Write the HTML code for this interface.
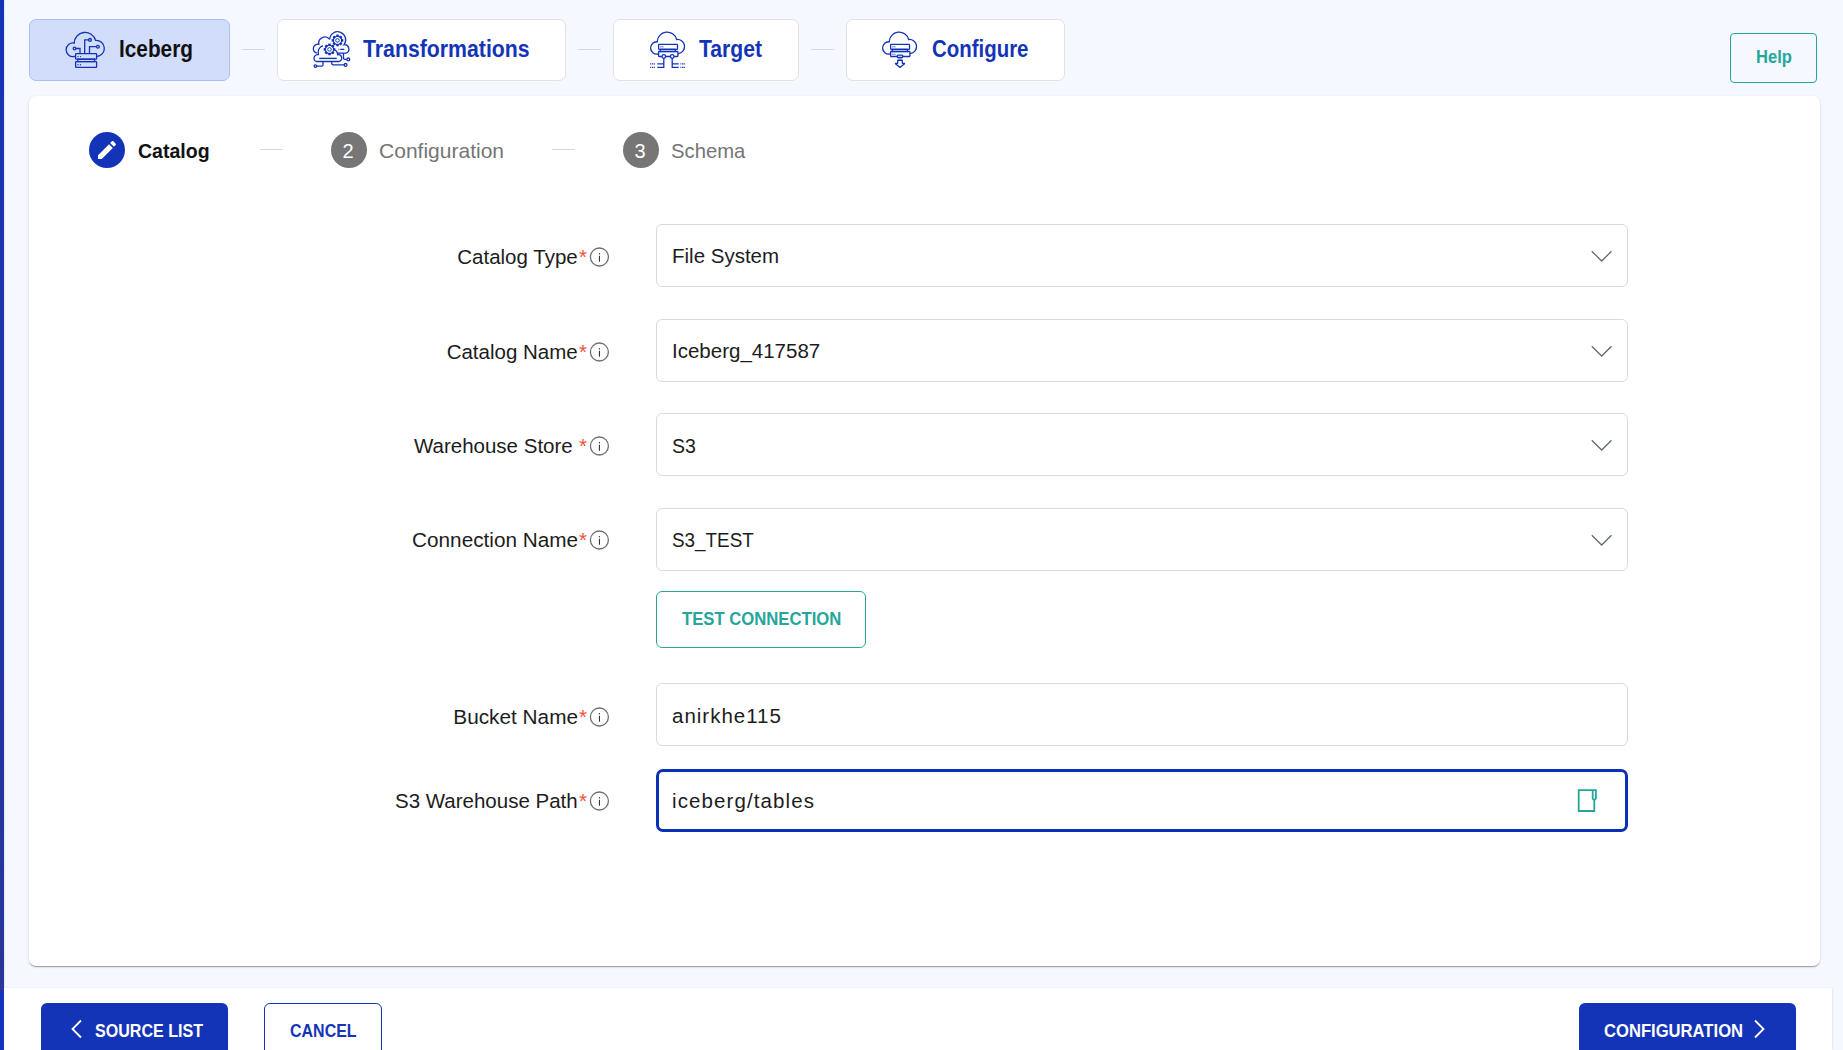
<!DOCTYPE html>
<html><head><meta charset="utf-8">
<style>
*{box-sizing:border-box;margin:0;padding:0}
html,body{width:1843px;height:1050px;overflow:hidden}
body{background:#f5f8fe;font-family:"Liberation Sans",sans-serif;position:relative;color:#1c1c1c}
.a{position:absolute}
.t{position:absolute;white-space:nowrap;display:block}
svg{position:absolute;overflow:visible}
</style></head><body>
<div class="a" style="left:0;top:0;width:4px;height:991px;background:linear-gradient(#1434b8 0px,#1a35b0 250px,#1f35a8 500px,#2236a3 750px,#26379e 900px,#2c3499 991px)"></div>
<div class="a" style="left:0;top:991px;width:4px;height:59px;background:#1434bd"></div>
<div class="a" style="left:4px;top:0;width:1px;height:1050px;background:#e6e7ea"></div>
<div class="a" style="left:29px;top:19px;width:201px;height:62px;background:#d1ddfb;border:1px solid #a9bff7;border-radius:7px"></div>
<div class="a" style="left:277px;top:19px;width:288.5px;height:62px;background:#ffffff;border:1px solid #e0e1e4;border-radius:7px"></div>
<div class="a" style="left:613px;top:19px;width:185.5px;height:62px;background:#ffffff;border:1px solid #e0e1e4;border-radius:7px"></div>
<div class="a" style="left:845.5px;top:19px;width:219.0px;height:62px;background:#ffffff;border:1px solid #e0e1e4;border-radius:7px"></div>
<div class="a" style="left:242px;top:49px;width:23px;height:1px;background:#d6d9df"></div>
<div class="a" style="left:578px;top:49px;width:23px;height:1px;background:#d6d9df"></div>
<div class="a" style="left:811px;top:49px;width:23px;height:1px;background:#d6d9df"></div>
<span class="t" style="left:118.8px;top:36.88px;font-size:24px;line-height:24px;color:#111;font-weight:bold;transform:scaleX(0.866);transform-origin:0 0;">Iceberg</span>
<span class="t" style="left:362.8px;top:36.68px;font-size:24px;line-height:24px;color:#1434b8;font-weight:bold;transform:scaleX(0.886);transform-origin:0 0;">Transformations</span>
<span class="t" style="left:698.5px;top:36.68px;font-size:24px;line-height:24px;color:#1434b8;font-weight:bold;transform:scaleX(0.881);transform-origin:0 0;">Target</span>
<span class="t" style="left:931.5px;top:36.68px;font-size:24px;line-height:24px;color:#1434b8;font-weight:bold;transform:scaleX(0.851);transform-origin:0 0;">Configure</span>
<svg style="left:0;top:0" width="1843" height="100" viewBox="0 0 1843 100">
<defs>
<g id="gear"><circle cx="0" cy="0" r="4.2" fill="none" stroke="#1434b8" stroke-width="1.1"/><circle cx="0" cy="0" r="1.8" fill="none" stroke="#1434b8" stroke-width="1"/>
<g fill="#1434b8"><rect x="-0.6" y="-5.2" width="1.2" height="1.2"/><rect x="-0.6" y="4" width="1.2" height="1.2"/><rect x="-5.2" y="-0.6" width="1.2" height="1.2"/><rect x="4" y="-0.6" width="1.2" height="1.2"/>
<g transform="rotate(45)"><rect x="-0.6" y="-5.2" width="1.2" height="1.2"/><rect x="-0.6" y="4" width="1.2" height="1.2"/><rect x="-5.2" y="-0.6" width="1.2" height="1.2"/><rect x="4" y="-0.6" width="1.2" height="1.2"/></g></g></g>
</defs>
<!-- Iceberg icon origin 60,28 -->
<g transform="translate(60,28)" fill="none" stroke="#1434b8" stroke-width="1.3">
<path d="M15.3,28.5 H14 A6.8,6.8 0 1 1 14.2,15.1 A10.9,10.9 0 0 1 35.6,12.4 A8,8 0 0 1 36.9,28.5 H36.7"/>
<rect x="15.6" y="25.6" width="21" height="5.6" rx="0.6"/>
<rect x="17.8" y="31.2" width="16.8" height="2.4"/>
<rect x="15.6" y="33.7" width="21" height="5.6" rx="0.6"/>
<path d="M15.8,20.5 H20 V25.6 M24.7,25.6 V11.8 H28.6 M29.5,25.6 V18.6 H36.5"/>
<circle cx="14.5" cy="20.5" r="1.3"/><circle cx="30" cy="11.9" r="1.4"/><circle cx="37.9" cy="18.7" r="1.4"/>
<g fill="#1434b8" stroke="none"><circle cx="18" cy="28.6" r="0.7"/><circle cx="20.5" cy="28.6" r="0.7"/><circle cx="18" cy="36.7" r="0.7"/><circle cx="20.5" cy="36.7" r="0.7"/></g>
</g>
<!-- Transformations origin 310,28 -->
<g transform="translate(310,28)" fill="none" stroke="#1434b8" stroke-width="1.3">
<path d="M19.7,11.3 A8,8 0 1 1 33.9,16.8 A4.3,4.3 0 0 1 36,25.1 H27.7"/>
<path d="M19.7,11.3 A6.2,6.2 0 0 0 8.8,16.3 A4.5,4.5 0 0 0 6.9,25.1"/>
<path d="M8.6,26.8 A7,7 0 0 1 13,17.6 M24.7,21.8 A6,6 0 0 1 27.7,26.8 A3.4,3.4 0 0 1 28.9,33.5 H6.3 A3.4,3.4 0 0 1 8.8,26.9"/>
<path d="M28.5,21.4 H35" stroke-dasharray="0.8 1 4 1 1.5"/>
<path d="M9.2,30.4 H26.8" stroke-width="1.4"/>
<path d="M13,33.5 V36.8 Q13,38.1 11.6,38.1 H6.7 M21.8,33.5 V35.6 Q21.8,36.9 23.2,36.9 H34.1 M33.5,25.1 V30.3 Q33.5,31.4 34.7,31.4 H36.9"/>
<circle cx="5.4" cy="38.1" r="1.3"/><circle cx="35.6" cy="36.9" r="1.4"/><circle cx="38.3" cy="31.4" r="1.4"/>
<use href="#gear" transform="translate(27.5,12.4)"/>
<use href="#gear" transform="translate(19.5,21.4)"/>
</g>
<!-- Target origin 646,28 -->
<g transform="translate(646,28)" fill="none" stroke="#1434b8" stroke-width="1.3">
<path d="M12.6,26 H11.7 A6.15,6.15 0 1 1 11.3,13.8 A9.8,9.8 0 0 1 30.6,11.5 A7.1,7.1 0 0 1 32.3,25.6 H31.9"/>
<rect x="12.6" y="16.3" width="18.9" height="5" rx="0.5"/>
<rect x="14.3" y="21.3" width="15" height="2.2"/>
<rect x="12.6" y="23.5" width="19.3" height="5" rx="0.5"/>
<path d="M14.3,18.8 H17.6" stroke-width="1.5" stroke-dasharray="1 0.4" opacity="0.6"/>
<circle cx="17.8" cy="28.5" r="1.8" fill="#fff"/><circle cx="26.2" cy="28.5" r="1.8" fill="#fff"/>
<path d="M17.8,30.3 V39.4 H11.3 M17.8,35.8 H11.3 M26.2,30.3 V39.4 H32.7 M26.2,35.8 H32.7"/>
<path d="M4.2,35.8 H9.6 M4.2,39.4 H9.6 M34.4,35.8 H39.8 M34.4,39.4 H39.8" stroke-dasharray="0.9 0.7 1.5 0.7"/>
</g>
<!-- Configure origin 878,28 -->
<g transform="translate(878,28)" fill="none" stroke="#1434b8" stroke-width="1.3">
<path d="M12.6,26 H11.7 A6.15,6.15 0 1 1 11.3,13.8 A9.8,9.8 0 0 1 30.6,11.5 A7.1,7.1 0 0 1 32.3,25.6 H31.9"/>
<rect x="12.6" y="16.3" width="18.9" height="5" rx="0.5"/>
<rect x="14.3" y="21.3" width="15" height="2.2"/>
<rect x="12.6" y="23.5" width="19.3" height="5" rx="0.5"/>
<path d="M14.3,18.8 H17.6 M14.3,26.2 H17.6" stroke-width="1.5" stroke-dasharray="1 0.4" opacity="0.6"/>
<rect x="19.3" y="27.2" width="5.4" height="2.3" rx="0.8" fill="#fff"/>
<rect x="19.7" y="30" width="4.6" height="2" fill="#8fa2e0" stroke="none"/>
<path d="M19.7,32.3 V35.4 H17.2 L22,39.4 L26.8,35.4 H24.3 V32.3 Z" stroke-linejoin="bevel"/>
</g>
</svg>

<div class="a" style="left:1730px;top:33px;width:87px;height:50px;border:1px solid #26a69a;border-radius:4px"></div>
<span class="t" style="left:1756.2px;top:47.66px;font-size:18px;line-height:18px;color:#26a69a;font-weight:bold;transform:scaleX(0.92);transform-origin:0 0;">Help</span>
<div class="a" style="left:29px;top:96px;width:1791px;height:870px;background:#fff;border-radius:7px;box-shadow:0 2px 1px -1px rgba(0,0,0,.2),0 1px 1px 0 rgba(0,0,0,.14),0 1px 3px 0 rgba(0,0,0,.12)"></div>
<div class="a" style="left:89px;top:132px;width:36px;height:36px;border-radius:50%;background:#1434b8"></div>
<svg style="left:95px;top:138px" width="24" height="24" viewBox="0 0 24 24"><path fill="#fff" d="M3 17.25V21h3.75L17.81 9.94l-3.75-3.75L3 17.25zM20.71 7.04c.39-.39.39-1.02 0-1.41l-2.34-2.34c-.39-.39-1.02-.39-1.41 0l-1.83 1.83 3.75 3.75 1.83-1.83z"/></svg>
<span class="t" style="left:138px;top:140.22px;font-size:21px;line-height:21px;color:#111;font-weight:bold;transform:scaleX(0.93);transform-origin:0 0;">Catalog</span>
<div class="a" style="left:260px;top:149px;width:23px;height:1px;background:#d6d9df"></div>
<div class="a" style="left:331px;top:132px;width:36px;height:36px;border-radius:50%;background:#767676"></div>
<span class="t" style="left:342.5px;top:140.57px;font-size:20px;line-height:20px;color:#fff;">2</span>
<span class="t" style="left:379.1px;top:140.02px;font-size:21px;line-height:21px;color:#757575;">Configuration</span>
<div class="a" style="left:552px;top:149px;width:23px;height:1px;background:#d6d9df"></div>
<div class="a" style="left:623px;top:132px;width:36px;height:36px;border-radius:50%;background:#767676"></div>
<span class="t" style="left:634.5px;top:140.57px;font-size:20px;line-height:20px;color:#fff;">3</span>
<span class="t" style="left:671.3px;top:140.02px;font-size:21px;line-height:21px;color:#757575;transform:scaleX(0.965);transform-origin:0 0;">Schema</span>
<span class="t" style="right:1265.3px;top:246.95px;font-size:20.5px;line-height:20.5px;color:#1c1c1c;">Catalog Type</span>
<span class="t" style="left:579px;top:246.95px;font-size:20.5px;line-height:20.5px;color:#f3513a;">*</span>
<svg style="left:589px;top:246.8px" width="21" height="21" viewBox="0 0 21 21"><circle cx="10.4" cy="10" r="9" fill="none" stroke="#6f6f6f" stroke-width="1.3"/><rect x="9.9" y="8.8" width="1.1" height="5.9" fill="#333"/><rect x="9.9" y="6.1" width="1.1" height="1.3" fill="#333"/></svg>
<div class="a" style="left:656px;top:224px;width:972px;height:63px;background:#fff;border:1px solid #dadada;border-radius:6px"></div>
<span class="t" style="left:672px;top:246.45px;font-size:20.5px;line-height:20.5px;color:#1c1c1c;">File System</span>
<svg style="left:1590px;top:250px" width="24" height="12" viewBox="0 0 24 12"><path d="M1.8 1.2 L11.7 11 L21.5 1.2" fill="none" stroke="#5d6975" stroke-width="1.25"/></svg>
<span class="t" style="right:1265.3px;top:341.65px;font-size:20.5px;line-height:20.5px;color:#1c1c1c;">Catalog Name</span>
<span class="t" style="left:579px;top:341.65px;font-size:20.5px;line-height:20.5px;color:#f3513a;">*</span>
<svg style="left:589px;top:341.5px" width="21" height="21" viewBox="0 0 21 21"><circle cx="10.4" cy="10" r="9" fill="none" stroke="#6f6f6f" stroke-width="1.3"/><rect x="9.9" y="8.8" width="1.1" height="5.9" fill="#333"/><rect x="9.9" y="6.1" width="1.1" height="1.3" fill="#333"/></svg>
<div class="a" style="left:656px;top:319px;width:972px;height:63px;background:#fff;border:1px solid #dadada;border-radius:6px"></div>
<span class="t" style="left:672px;top:341.15px;font-size:20.5px;line-height:20.5px;color:#1c1c1c;">Iceberg_417587</span>
<svg style="left:1590px;top:345px" width="24" height="12" viewBox="0 0 24 12"><path d="M1.8 1.2 L11.7 11 L21.5 1.2" fill="none" stroke="#5d6975" stroke-width="1.25"/></svg>
<span class="t" style="right:1270.3px;top:436.35px;font-size:20.5px;line-height:20.5px;color:#1c1c1c;">Warehouse Store</span>
<span class="t" style="left:579px;top:436.35px;font-size:20.5px;line-height:20.5px;color:#f3513a;">*</span>
<svg style="left:589px;top:436.2px" width="21" height="21" viewBox="0 0 21 21"><circle cx="10.4" cy="10" r="9" fill="none" stroke="#6f6f6f" stroke-width="1.3"/><rect x="9.9" y="8.8" width="1.1" height="5.9" fill="#333"/><rect x="9.9" y="6.1" width="1.1" height="1.3" fill="#333"/></svg>
<div class="a" style="left:656px;top:413px;width:972px;height:63px;background:#fff;border:1px solid #dadada;border-radius:6px"></div>
<span class="t" style="left:672px;top:435.85px;font-size:20.5px;line-height:20.5px;color:#1c1c1c;transform:scaleX(0.95);transform-origin:0 0;">S3</span>
<svg style="left:1590px;top:439px" width="24" height="12" viewBox="0 0 24 12"><path d="M1.8 1.2 L11.7 11 L21.5 1.2" fill="none" stroke="#5d6975" stroke-width="1.25"/></svg>
<span class="t" style="right:1265.3px;top:530.35px;font-size:20.5px;line-height:20.5px;color:#1c1c1c;transform:scaleX(1.012);transform-origin:100% 0;">Connection Name</span>
<span class="t" style="left:579px;top:530.35px;font-size:20.5px;line-height:20.5px;color:#f3513a;">*</span>
<svg style="left:589px;top:530.2px" width="21" height="21" viewBox="0 0 21 21"><circle cx="10.4" cy="10" r="9" fill="none" stroke="#6f6f6f" stroke-width="1.3"/><rect x="9.9" y="8.8" width="1.1" height="5.9" fill="#333"/><rect x="9.9" y="6.1" width="1.1" height="1.3" fill="#333"/></svg>
<div class="a" style="left:656px;top:508px;width:972px;height:63px;background:#fff;border:1px solid #dadada;border-radius:6px"></div>
<span class="t" style="left:672px;top:529.85px;font-size:20.5px;line-height:20.5px;color:#1c1c1c;transform:scaleX(0.92);transform-origin:0 0;">S3_TEST</span>
<svg style="left:1590px;top:534px" width="24" height="12" viewBox="0 0 24 12"><path d="M1.8 1.2 L11.7 11 L21.5 1.2" fill="none" stroke="#5d6975" stroke-width="1.25"/></svg>
<span class="t" style="right:1265.3px;top:706.65px;font-size:20.5px;line-height:20.5px;color:#1c1c1c;transform:scaleX(1.014);transform-origin:100% 0;">Bucket Name</span>
<span class="t" style="left:579px;top:706.65px;font-size:20.5px;line-height:20.5px;color:#f3513a;">*</span>
<svg style="left:589px;top:706.5px" width="21" height="21" viewBox="0 0 21 21"><circle cx="10.4" cy="10" r="9" fill="none" stroke="#6f6f6f" stroke-width="1.3"/><rect x="9.9" y="8.8" width="1.1" height="5.9" fill="#333"/><rect x="9.9" y="6.1" width="1.1" height="1.3" fill="#333"/></svg>
<div class="a" style="left:656px;top:683px;width:972px;height:63px;background:#fff;border:1px solid #dadada;border-radius:6px"></div>
<span class="t" style="left:672px;top:706.15px;font-size:20.5px;line-height:20.5px;color:#1c1c1c;letter-spacing:1.0px;">anirkhe115</span>
<span class="t" style="right:1265.3px;top:791.45px;font-size:20.5px;line-height:20.5px;color:#1c1c1c;">S3 Warehouse Path</span>
<span class="t" style="left:579px;top:791.45px;font-size:20.5px;line-height:20.5px;color:#f3513a;">*</span>
<svg style="left:589px;top:791.3px" width="21" height="21" viewBox="0 0 21 21"><circle cx="10.4" cy="10" r="9" fill="none" stroke="#6f6f6f" stroke-width="1.3"/><rect x="9.9" y="8.8" width="1.1" height="5.9" fill="#333"/><rect x="9.9" y="6.1" width="1.1" height="1.3" fill="#333"/></svg>
<div class="a" style="left:656px;top:769px;width:972px;height:63px;background:#fff;border:3px solid #0b2fb6;border-radius:7px"></div>
<span class="t" style="left:672px;top:790.95px;font-size:20.5px;line-height:20.5px;color:#1c1c1c;letter-spacing:1.1px;">iceberg/tables</span>
<div class="a" style="left:656px;top:591px;width:210px;height:57px;border:1px solid #26a69a;border-radius:6px"></div>
<span class="t" style="left:682px;top:609.66px;font-size:18px;line-height:18px;color:#26a69a;font-weight:bold;transform:scaleX(0.926);transform-origin:0 0;">TEST CONNECTION</span>
<svg style="left:0;top:0" width="1843" height="1050" viewBox="0 0 1843 1050"><path d="M1594.3,800.2 V811 H1578.7 V790.2 H1595.9 V798.6 L1594.3,800.2 L1592.7,798.6 V790.2" fill="none" stroke="#26a69a" stroke-width="1.8" stroke-linejoin="miter"/></svg>
<div class="a" style="left:4px;top:988px;width:1828px;height:62px;background:#fff;box-shadow:1px 0 2px rgba(0,0,0,.08)"></div>
<div class="a" style="left:41px;top:1003px;width:187px;height:60px;background:#1434b8;border-radius:6px"></div>
<svg style="left:70px;top:1019px" width="14" height="20" viewBox="0 0 14 20"><path d="M11 1.5 L2.5 10 L11 18.5" fill="none" stroke="#fff" stroke-width="1.8"/></svg>
<span class="t" style="left:94.6px;top:1021.96px;font-size:18px;line-height:18px;color:#fff;font-weight:bold;transform:scaleX(0.893);transform-origin:0 0;">SOURCE LIST</span>
<div class="a" style="left:264px;top:1003px;width:118px;height:60px;background:#fff;border:1px solid #1434b8;border-radius:6px"></div>
<span class="t" style="left:290px;top:1021.96px;font-size:18px;line-height:18px;color:#1434b8;font-weight:bold;transform:scaleX(0.888);transform-origin:0 0;">CANCEL</span>
<div class="a" style="left:1579px;top:1003px;width:217px;height:60px;background:#1434b8;border-radius:6px"></div>
<svg style="left:1752px;top:1019px" width="14" height="20" viewBox="0 0 14 20"><path d="M3 1.5 L11.5 10 L3 18.5" fill="none" stroke="#fff" stroke-width="1.8"/></svg>
<span class="t" style="left:1603.8px;top:1021.66px;font-size:18px;line-height:18px;color:#fff;font-weight:bold;transform:scaleX(0.923);transform-origin:0 0;">CONFIGURATION</span>
</body></html>
